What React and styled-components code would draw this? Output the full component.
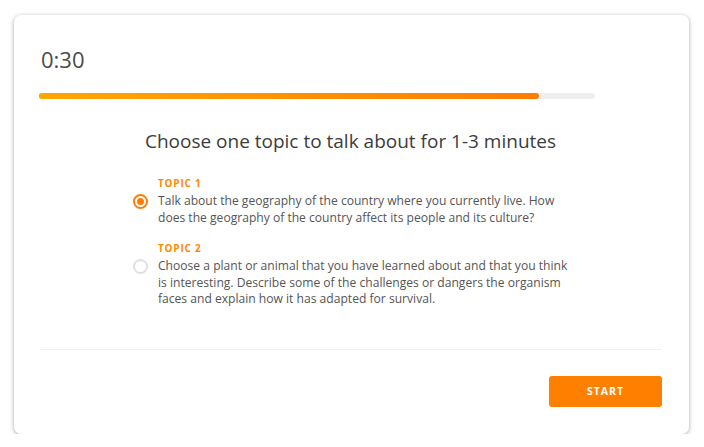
import React, { useState } from "react";
import styled, { createGlobalStyle } from "styled-components";

const GlobalStyle = createGlobalStyle`
  html, body {
    margin: 0;
    padding: 0;
    background: #ffffff;
  }
  body {
    font-family: "Open Sans", "Liberation Sans", sans-serif;
  }
`;

const topics = [
  {
    label: "TOPIC 1",
    text: "Talk about the geography of the country where you currently live. How does the geography of the country affect its people and its culture?",
  },
  {
    label: "TOPIC 2",
    text: "Choose a plant or animal that you have learned about and that you think is interesting. Describe some of the challenges or dangers the organism faces and explain how it has adapted for survival.",
  },
];

export default function App() {
  const [selected, setSelected] = useState(0);
  const progress = 90;

  return (
    <Page>
      <GlobalStyle />
      <Card>
        <Timer>0:30</Timer>
        <Track>
          <Fill style={{ width: `${progress}%` }} />
        </Track>
        <Title>Choose one topic to talk about for 1-3 minutes</Title>
        <TopicList>
          {topics.map((t, i) => (
            <Topic key={t.label} onClick={() => setSelected(i)}>
              <TopicLabel>{t.label}</TopicLabel>
              <TopicRow>
                <Radio $checked={selected === i} />
                <TopicText>{t.text}</TopicText>
              </TopicRow>
            </Topic>
          ))}
        </TopicList>
        <Divider />
        <Footer>
          <StartButton>START</StartButton>
        </Footer>
      </Card>
    </Page>
  );
}

const Page = styled.div`
  padding: 15px 15px 0 14px;
`;

const Card = styled.div`
  box-sizing: border-box;
  width: 675px;
  height: 419px;
  background: #fff;
  border-radius: 7px;
  box-shadow: 0 1px 4px rgba(0, 0, 0, 0.35);
  padding: 0 27px 0 25px;
  display: flex;
  flex-direction: column;
`;

const Timer = styled.div`
  margin-top: 29px;
  padding-left: 2px;
  font-size: 22px;
  line-height: 30px;
  color: #4b4b4b;
`;

const Track = styled.div`
  margin-top: 19px;
  width: 556px;
  height: 6px;
  background: #efefef;
  border-radius: 0 3px 3px 0;
  overflow: hidden;
`;

const Fill = styled.div`
  height: 100%;
  border-radius: 3px;
  background: linear-gradient(90deg, #ffa600, #ff7d00);
`;

const Title = styled.h1`
  margin: 29px 0 0;
  text-align: center;
  font-size: 19px;
  font-weight: 400;
  line-height: 26px;
  color: #3c3c3c;
`;

const TopicList = styled.div`
  margin-top: 22px;
  padding-left: 94px;
  display: flex;
  flex-direction: column;
  gap: 15px;
`;

const Topic = styled.div`
  display: flex;
  flex-direction: column;
  cursor: pointer;
`;

const TopicLabel = styled.div`
  margin-left: 25px;
  font-size: 10px;
  font-weight: 700;
  letter-spacing: 0.8px;
  line-height: 14px;
  color: #ff8a00;
`;

const TopicRow = styled.div`
  margin-top: 3px;
  display: flex;
  align-items: flex-start;
  gap: 10px;
`;

const Radio = styled.span`
  box-sizing: border-box;
  flex: none;
  width: 15px;
  height: 15px;
  margin-top: 1px;
  border-radius: 50%;
  border: 2px solid ${(p) => (p.$checked ? "#ff7d00" : "#e0e0e0")};
  display: flex;
  align-items: center;
  justify-content: center;
  &::after {
    content: "";
    width: 7px;
    height: 7px;
    border-radius: 50%;
    background: ${(p) => (p.$checked ? "#ff7d00" : "transparent")};
  }
`;

const TopicText = styled.p`
  margin: 0;
  width: 420px;
  font-size: 12.1px;
  line-height: 16.5px;
  color: #555;
`;

const Divider = styled.div`
  margin-top: 41px;
  margin-left: 2px;
  height: 1px;
  background: #f0f0f0;
`;

const Footer = styled.div`
  margin-top: 26px;
  display: flex;
  justify-content: flex-end;
`;

const StartButton = styled.button`
  width: 113px;
  height: 31px;
  border: none;
  border-radius: 3px;
  background: #ff7f00;
  color: #fff;
  font-family: inherit;
  font-size: 10.5px;
  font-weight: 700;
  letter-spacing: 1px;
  cursor: pointer;
`;
